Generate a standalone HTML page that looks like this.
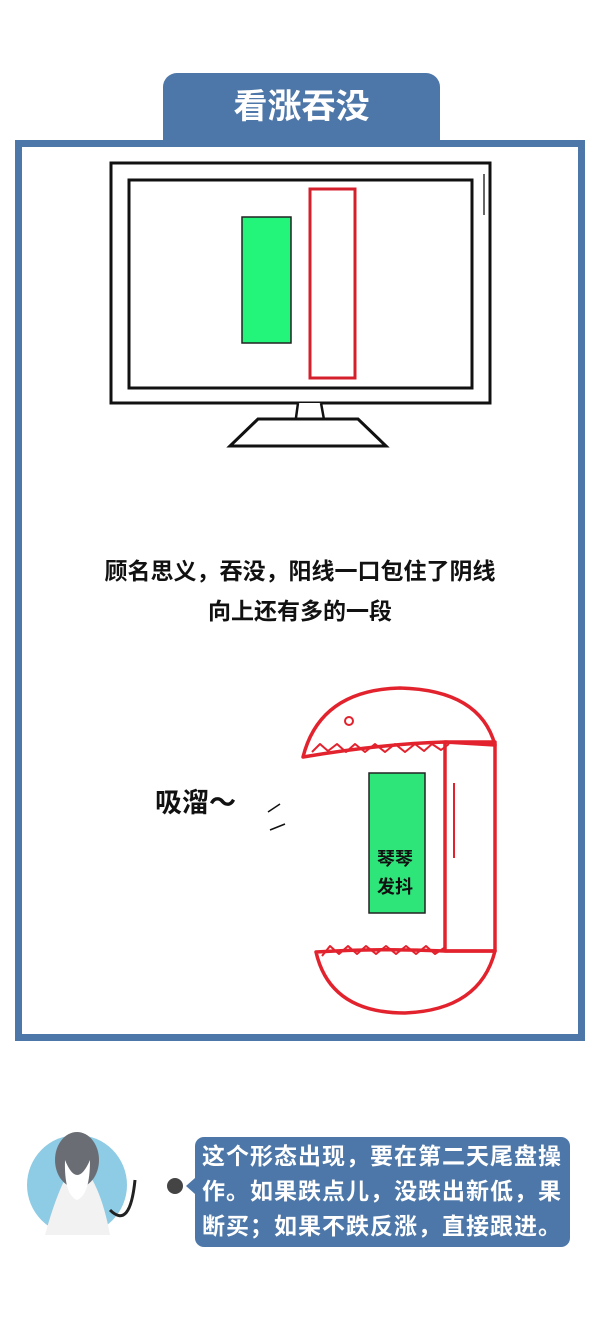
<!DOCTYPE html>
<html><head><meta charset="utf-8"><style>
body{margin:0;width:600px;height:1325px;background:#fff;position:relative;overflow:hidden;font-family:"Liberation Sans","Noto Sans CJK SC",sans-serif}
.tab{position:absolute;left:163px;top:73px;width:277px;height:72px;background:#4d77a8;border-radius:14px 14px 0 0;color:#fff;font-size:34px;font-weight:bold;text-align:center;line-height:68px}
.frame{position:absolute;left:15px;top:140px;width:556px;height:887px;border:7px solid #4d77a8}
.t{position:absolute;left:0;width:600px;text-align:center;font-size:23px;font-weight:bold;color:#111}
.bub{position:absolute;left:195px;top:1137px;width:375px;height:110px;background:#4d77a8;border-radius:9px;color:#fff;font-size:23px;letter-spacing:1px;font-weight:bold;line-height:35px;padding:2px 0 0 7px;box-sizing:border-box;white-space:nowrap}
</style></head><body>
<div class="tab">看涨吞没</div>
<div class="frame"></div>
<svg style="position:absolute;left:0;top:0" width="600" height="1325">
<rect x="111" y="163" width="379" height="240" fill="none" stroke="#111" stroke-width="3"/>
<rect x="129" y="180" width="343" height="208" fill="none" stroke="#111" stroke-width="3"/>
<line x1="484" y1="174" x2="484" y2="215" stroke="#333" stroke-width="1.5"/>
<rect x="242" y="217" width="49" height="126" fill="#22f57a" stroke="#222" stroke-width="1.5"/>
<rect x="310" y="189" width="45" height="189" fill="none" stroke="#d4202c" stroke-width="3"/>
<path d="M298 403 L295 425 Q310 430 325 425 L321 403" fill="#fff" stroke="#111" stroke-width="2.5"/>
<path d="M258 419 L358 419 L386 446 L230 446 Z" fill="#fff" stroke="#111" stroke-width="3"/>
<g fill="none" stroke="#e2232e" stroke-width="3.5" stroke-linejoin="round">
<path d="M303 757 Q320 690 400 688 Q480 690 495 745 L445 742 Q380 744 303 757 Z"/>
<path d="M312 752 l8 -8 8 7 9 -7 9 8 9 -8 10 8 10 -8 10 8 10 -8 10 8 10 -8 9 7 8 -7 9 6 8 -6" stroke-width="2"/>
<rect x="445" y="742" width="50" height="209"/>
<path d="M316 952 Q330 1013 405 1013 Q480 1010 495 951 L445 951 Q380 948 316 952 Z"/>
<path d="M322 956 l8 -10 9 8 9 -8 9 8 9 -8 10 8 10 -8 10 8 10 -8 10 8 10 -8 9 8 9 -6" stroke-width="2"/>
<circle cx="349" cy="721" r="4" stroke-width="2"/>
</g>
<line x1="454" y1="783" x2="454" y2="858" stroke="#e2232e" stroke-width="2"/>
<rect x="369" y="773" width="56" height="140" fill="#2ee57a" stroke="#222" stroke-width="1.5"/>
<text x="377" y="865" font-size="18" font-weight="bold" fill="#111" font-family="Liberation Sans,Noto Sans CJK SC,sans-serif">琴琴</text>
<text x="377" y="893" font-size="18" font-weight="bold" fill="#111" font-family="Liberation Sans,Noto Sans CJK SC,sans-serif">发抖</text>
<text x="155" y="812" font-size="27" font-weight="bold" fill="#111" font-family="Liberation Sans,Noto Sans CJK SC,sans-serif">吸溜～</text>
<path d="M268 812 l12 -8 M270 830 l15 -6" stroke="#111" stroke-width="1.5"/>
<circle cx="77" cy="1185" r="50" fill="#8ecbe4"/>
<path d="M45 1235 Q60 1180 77 1160 Q100 1180 110 1235 Z" fill="#f2f2f2"/>
<ellipse cx="77" cy="1160" rx="22" ry="28" fill="#6a6e74"/>
<path d="M65 1160 Q77 1190 90 1160 Q90 1195 77 1200 Q64 1195 65 1160Z" fill="#fff"/>
<path d="M135 1180 Q130 1230 110 1210" fill="none" stroke="#222" stroke-width="3"/>
<circle cx="175" cy="1186" r="8" fill="#444"/>
<path d="M195 1178 L186 1186 L195 1194 Z" fill="#4d77a8"/>
</svg>
<div class="t" style="top:552px">顾名思义，吞没，阳线一口包住了阴线</div>
<div class="t" style="top:592px">向上还有多的一段</div>
<div class="bub">这个形态出现，要在第二天尾盘操<br>作。如果跌点儿，没跌出新低，果<br>断买；如果不跌反涨，直接跟进。</div>
</body></html>
